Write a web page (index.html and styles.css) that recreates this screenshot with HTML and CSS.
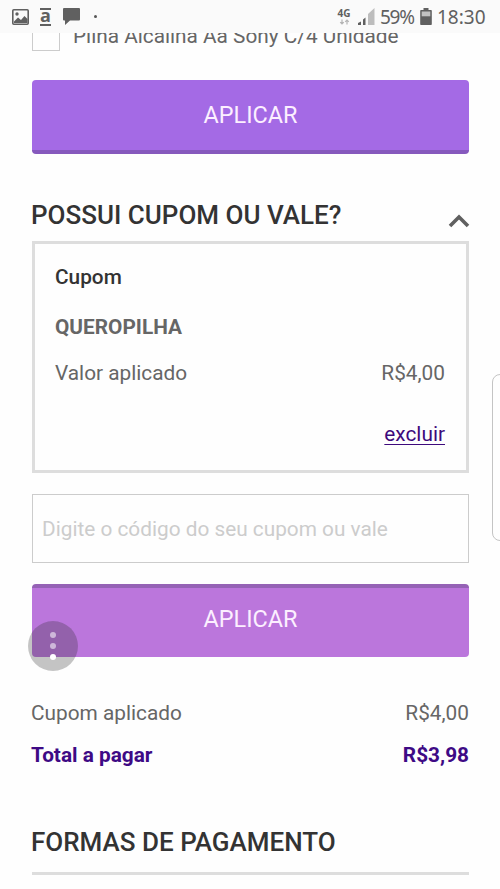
FILE: index.html
```html
<!DOCTYPE html>
<html lang="pt-BR">
<head>
<meta charset="utf-8">
<title>Carrinho</title>
<link rel="stylesheet" href="styles.css">
</head>
<body>
<header class="status">
  <div class="status-left">
    <svg class="ic-photo" width="17" height="16" viewBox="0 0 17 16"><rect x=".8" y=".8" width="15.400" height="14.400" rx="1" fill="none" stroke="#606060" stroke-width="1.600"/><circle cx="5" cy="5" r="1.700" fill="#606060"/><path d="M2 12.500l4-4 3 2.500 3.500-4 3 3V14H2z" fill="#606060"/></svg>
    <span class="letter">a</span>
    <svg class="ic-chat" width="17" height="17" viewBox="0 0 17 17"><path fill="#606060" d="M1 0h15q1 0 1 1v10.500q0 1-1 1H7L2 17v-4.500H1q-1 0-1-1V1q0-1 1-1z"/></svg>
    <span class="dot"></span>
  </div>
  <div class="status-right">
    <div class="net"><b>4G</b><svg width="11" height="6" viewBox="0 0 11 6"><path d="M3 .5v4.500M1.200 3.200L3 5l1.800-1.800M8 5.500V1M6.200 2.800L8 1l1.800 1.800" fill="none" stroke="#b4b4b4" stroke-width="1.200"/></svg></div>
    <svg class="ic-signal" width="17" height="17" viewBox="0 0 17 17"><path fill="#606060" d="M0 15l3-1.500V17H0zM5 11.500l2.500-2V17H5z"/><path fill="#bdbdbd" d="M10 6l6.500-6v17H10z"/></svg>
    <span class="pct">59%</span>
    <svg class="ic-batt" width="12" height="17" viewBox="0 0 12 17"><path fill="#606060" d="M3.500 0h5v2H11q.8 0 .8.8v13.400q0 .8-.8.8H1q-.8 0-.8-.8V2.800Q.2 2 1 2h2.500z"/><path fill="#c2c2c2" d="M1.700 3.500h8.600v4.800H1.700z"/></svg>
    <span class="time">18:30</span>
  </div>
</header>
<main class="page">
  <div class="option"><span class="check"></span><span class="option-label">Pilha Alcalina Aa Sony C/4 Unidade</span></div>
  <button class="btn">APLICAR</button>
  <div class="head">
    <h2 class="title">POSSUI CUPOM OU VALE?</h2>
    <svg class="chevron" width="22" height="14" viewBox="0 0 22 14"><path d="M2 12l9-9 9 9" fill="none" stroke="#606060" stroke-width="3.600"/></svg>
  </div>
  <section class="card">
    <div class="coupon">Cupom</div>
    <div class="code">QUEROPILHA</div>
    <div class="row"><span>Valor aplicado</span><span>R$4,00</span></div>
    <a class="remove" href="#">excluir</a>
  </section>
  <input class="field" type="text" placeholder="Digite o código do seu cupom ou vale">
  <button class="btn btn-pressed">APLICAR</button>
  <div class="row applied"><span>Cupom aplicado</span><span>R$4,00</span></div>
  <div class="row total"><span>Total a pagar</span><span>R$3,98</span></div>
  <h2 class="title payment">FORMAS DE PAGAMENTO</h2>
</main>
<div class="bubble"><i></i><i></i><i></i></div>
<div class="edge"></div>
</body>
</html>
```
FILE: styles.css
```css
* { box-sizing: border-box; }
body {
  margin: 0;
  height: 889px;
  overflow: hidden;
  position: relative;
  background: #fefefe;
  color: #666;
  font: 20.800px/30px Roboto, sans-serif;
}
.status {
  height: 33px;
  background: #fafafa;
  display: flex;
  justify-content: space-between;
  padding: 0 13px 0 12px;
  color: #606060;
}
.status-left, .status-right { display: flex; align-items: flex-start; }
.ic-photo { margin-top: 9px; }
.letter {
  width: 11px;
  height: 18px;
  margin: 8px 0 0 11px;
  border-top: 2px solid #606060;
  border-bottom: 2px solid #606060;
  font: bold 18px/11px "Open Sans", sans-serif;
  text-align: center;
}
.ic-chat { margin: 8px 0 0 12px; }
.dot { width: 3px; height: 3px; border-radius: 50%; background: #555; margin: 15px 0 0 14px; }
.net { width: 14px; margin: 9px 7px 0 0; display: flex; flex-direction: column; align-items: center; }
.net b { font: bold 10px/9px "Open Sans", sans-serif; }
.net svg { margin-top: 1px; }
.ic-signal { margin: 8px 6px 0 0; }
.pct, .time { font: 19px/34px "Noto Sans", sans-serif; white-space: nowrap; height: 33px; }
.pct { width: 35px; letter-spacing: -1.300px; margin-left: -1px; }
.ic-batt { margin: 8px 5px 0 5px; }
.time { width: 50px; }
.page { padding: 0 31px 0 32px; }
.option { height: 47px; display: flex; overflow: hidden; }
.check { width: 28px; height: 18px; border: 1.500px solid #ccc; border-top: 0; }
.option-label { margin: -12px 0 0 13px; white-space: nowrap; }
.btn {
  display: block;
  width: 100%;
  height: 74px;
  border: 0;
  border-bottom: 4px solid #8659bd;
  border-radius: 4px;
  background: #a46ae5;
  color: #fcefff;
  font: 23.400px/68px Roboto, sans-serif;
  padding: 0 0 2px;
}
.btn:first-of-type { padding: 0; line-height: 70px; }
.btn-pressed.btn-pressed {
  height: 73px;
  border-bottom: 0;
  border-top: 4px solid #9562b5;
  background: #bb76dc;
  margin-top: 21px;
  line-height: 62px;
  padding: 0 0 7px;
}
.btn:not(.btn-pressed) { padding: 1px 0 0; line-height: 69px; }
.head { height: 87px; display: flex; justify-content: space-between; padding-top: 46px; }
.title { margin: 0 0 0 -1px; font: 500 26px/30px Roboto, sans-serif; color: #333; white-space: nowrap; }
.chevron { margin: 14px -1px 0 0; }
.card { height: 232px; border: 3px solid #ddd; padding: 18px 21px 0 20px; display: flex; flex-direction: column; }
.coupon { color: #333; font-weight: 500; }
.code { margin-top: 20px; font-weight: 700; }
.row { display: flex; justify-content: space-between; }
.card .row { margin-top: 16px; }
.remove { align-self: flex-end; margin-top: 31px; color: #3e0a7c; text-underline-offset: 3px; text-decoration-thickness: 1px; }
.field {
  display: block;
  width: 100%;
  height: 69px;
  margin-top: 21px;
  padding: 0 9px;
  border: 1.500px solid #ccc;
  border-radius: 0;
  background: #fefefe;
  font: 20.800px Roboto, sans-serif;
}
.field::placeholder { color: #ccc; opacity: 1; }
.applied { margin-top: 41px; }
.total { margin-top: 12px; color: #3e0a85; font-weight: 700; }
.applied, .total { margin-left: -1px; }
.payment { margin-top: 57px; margin-left: 0; text-indent: -1px; height: 48px; border-bottom: 3px solid #ddd; }
.bubble {
  position: absolute;
  left: 28px;
  top: 621px;
  width: 50px;
  height: 50px;
  border-radius: 50%;
  background: rgba(40, 40, 40, .27);
  display: flex;
  flex-direction: column;
  align-items: center;
  justify-content: center;
  gap: 5px;
}
.bubble i { width: 6px; height: 6px; border-radius: 50%; background: rgba(255, 255, 255, .55); }
.bubble i:last-child { background: #fff; }
.edge {
  position: absolute;
  left: 492px;
  top: 374px;
  width: 16px;
  height: 167px;
  border: 1.500px solid #c4c4c4;
  border-radius: 9px;
  background: #fefefe;
}
```
